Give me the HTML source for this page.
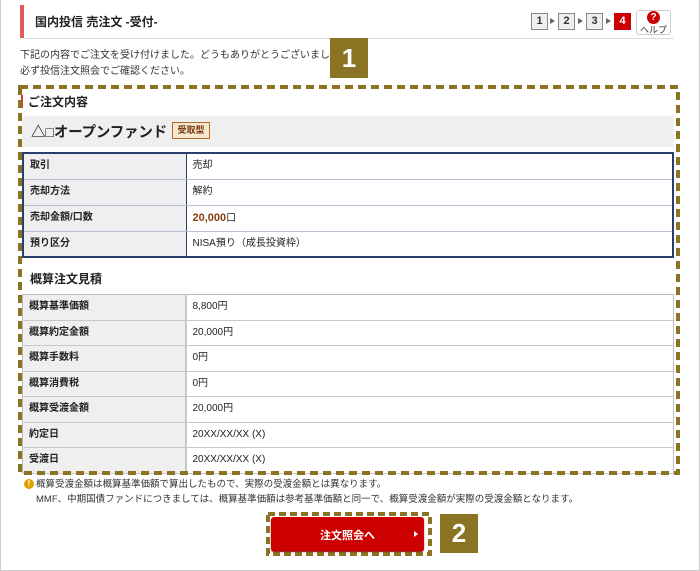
<!DOCTYPE html>
<html><head><meta charset="utf-8"><style>
*{margin:0;padding:0;box-sizing:border-box}
body{width:700px;height:571px;position:relative;background:#fff;font-family:"Liberation Sans","Noto Sans CJK JP",sans-serif;color:#222;overflow:hidden}
.a{position:absolute}
.step{position:absolute;top:13px;width:17px;height:17px;border:1px solid #888;background:#eee;font-size:11px;font-weight:bold;text-align:center;line-height:15px;color:#333}
.tri{position:absolute;top:18px;width:0;height:0;border-left:5px solid #666;border-top:3.5px solid transparent;border-bottom:3.5px solid transparent}
table{position:absolute;border-collapse:collapse;font-size:10px;table-layout:fixed}
td{padding:0 0 0 6px;line-height:12px;vertical-align:middle}
td.l{background:#efefef;font-weight:bold;width:163px}
.t1{left:22px;top:152px;width:652px;border:2px solid #2b3d6b}
.t1 td{height:26px;border-bottom:1px solid #b7bfd3}
.t1 td.l{border-right:1px solid #2b3d6b}
.t2{left:22px;top:294px;width:652px;border:1px solid #bbb}
.t2 td{height:25.5px;border-bottom:1px solid #c8c8c8}
.t2 td.l{border-right:2px solid #c8c8c8}
.badge{position:absolute;background:#8a7423;color:#fff;font-size:26px;font-weight:bold;text-align:center}
</style></head><body>
<div class="a" style="left:0;top:0;width:700px;height:571px;border:1px solid #ccc;border-top:none"></div>
<div class="a" style="left:20px;top:5px;width:4px;height:33px;background:#e05a5a"></div>
<div class="a" style="left:24px;top:38px;width:650px;height:1px;background:#ddd"></div>
<div class="a" style="left:35px;top:13px;font-size:12px;font-weight:bold">国内投信 売注文 -受付-</div>
<div class="step" style="left:531px">1</div><div class="tri" style="left:550px"></div>
<div class="step" style="left:558px">2</div><div class="tri" style="left:578px"></div>
<div class="step" style="left:586px">3</div><div class="tri" style="left:606px"></div>
<div class="step" style="left:614px;background:#cc0000;border-color:#cc0000;color:#fff">4</div>
<div class="a" style="left:636px;top:10px;width:35px;height:25px;border:1px solid #ccc;border-radius:3px;background:#fff"></div>
<div class="a" style="left:647px;top:11px;width:13px;height:13px;border-radius:50%;background:#cc0000;color:#fff;font-size:10px;font-weight:bold;text-align:center;line-height:13px">?</div>
<div class="a" style="left:640px;top:23px;font-size:9px;color:#333">ヘルプ</div>
<div class="a" style="left:20px;top:48px;font-size:10px;line-height:16px;color:#333">下記の内容でご注文を受け付けました。どうもありがとうございました。<br>必ず投信注文照会でご確認ください。</div>
<div class="badge" style="left:330px;top:38px;width:38px;height:40px;line-height:40px">1</div>
<div class="a" style="left:22px;top:116px;width:652px;height:31px;background:#efefef"></div>
<div class="a" style="left:21px;top:95px;width:2px;height:13px;background:#d33"></div>
<div class="a" style="left:28px;top:93px;font-size:12px;font-weight:bold">ご注文内容</div>
<div class="a" style="left:31px;top:121px;font-size:14.5px;font-weight:bold;letter-spacing:-0.2px">△□オープンファンド</div>
<div class="a" style="left:172px;top:122px;width:38px;height:17px;border:1px solid #b5692b;background:#f6e7cf;font-size:9px;font-weight:bold;color:#7a3a10;text-align:center;line-height:15px">受取型</div>
<table class="t1">
<tr><td class="l">取引</td><td>売却</td></tr>
<tr><td class="l">売却方法</td><td>解約</td></tr>
<tr><td class="l">売却金額/口数</td><td><b style="color:#8a3c10;font-size:11px">20,000</b>口</td></tr>
<tr><td class="l" style="border-bottom:none">預り区分</td><td style="border-bottom:none">NISA預り（成長投資枠）</td></tr>
</table>
<div class="a" style="left:30px;top:270px;font-size:12px;font-weight:bold">概算注文見積</div>
<table class="t2">
<tr><td class="l">概算基準価額</td><td>8,800円</td></tr>
<tr><td class="l">概算約定金額</td><td>20,000円</td></tr>
<tr><td class="l">概算手数料</td><td>0円</td></tr>
<tr><td class="l">概算消費税</td><td>0円</td></tr>
<tr><td class="l">概算受渡金額</td><td>20,000円</td></tr>
<tr><td class="l">約定日</td><td>20XX/XX/XX (X)</td></tr>
<tr><td class="l">受渡日</td><td>20XX/XX/XX (X)</td></tr>
</table>
<svg class="a" style="left:0;top:0" width="700" height="571">
<rect x="20" y="87" width="658" height="386" fill="none" stroke="#8a7423" stroke-width="4" stroke-dasharray="8 5"/>
<rect x="268" y="514" width="162" height="40" fill="none" stroke="#8a7423" stroke-width="4" stroke-dasharray="7 4"/>
</svg>
<div class="a" style="left:24px;top:479px;width:10px;height:10px;border-radius:50%;background:#e0a000;color:#fff;font-size:8px;font-weight:bold;text-align:center;line-height:10px">!</div>
<div class="a" style="left:36px;top:477px;font-size:9.5px;line-height:15px;color:#333">概算受渡金額は概算基準価額で算出したもので、実際の受渡金額とは異なります。</div>
<div class="a" style="left:36px;top:492px;font-size:9.5px;line-height:15px;color:#333">MMF、中期国債ファンドにつきましては、概算基準価額は参考基準価額と同一で、概算受渡金額が実際の受渡金額となります。</div>
<div class="a" style="left:271px;top:517px;width:153px;height:34px;background:#cc0000;border-radius:3px;box-shadow:0 1px 1px #800"></div>
<div class="a" style="left:320px;top:527px;font-size:11px;font-weight:bold;color:#fff">注文照会へ</div>
<div class="a" style="left:414px;top:531px;width:0;height:0;border-left:4px solid #fff;border-top:3px solid transparent;border-bottom:3px solid transparent"></div>
<div class="badge" style="left:440px;top:514px;width:38px;height:39px;line-height:39px">2</div>
</body></html>
